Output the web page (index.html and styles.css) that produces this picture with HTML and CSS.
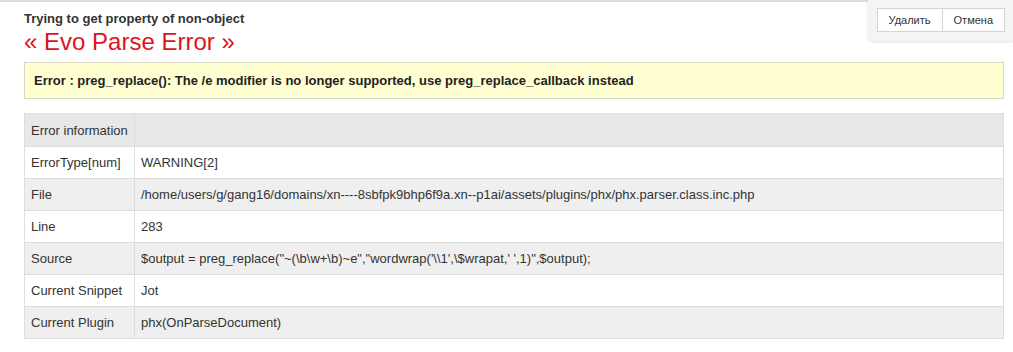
FILE: index.html
```html
<!DOCTYPE html>
<html lang="ru">
<head>
    <meta charset="UTF-8">
    <meta name="viewport" content="width=device-width, initial-scale=1.0">
    <title>Evo Parse Error</title>
    <link rel="stylesheet" href="styles.css">
</head>
<body>

<!-- Панель действий -->
<div class="actions">
    <button type="button" class="btn">Удалить</button><button type="button" class="btn">Отмена</button>
</div>

<div class="page">
    <h3 class="notice">Trying to get property of non-object</h3>
    <h2 class="title">« Evo Parse Error »</h2>

    <div class="message">Error : preg_replace(): The /e modifier is no longer supported, use preg_replace_callback instead</div>

    <!-- Информация об ошибке -->
    <table class="info">
        <tr class="head">
            <td class="key">Error information</td>
            <td></td>
        </tr>
        <tr>
            <td class="key">ErrorType[num]</td>
            <td>WARNING[2]</td>
        </tr>
        <tr class="odd">
            <td class="key">File</td>
            <td>/home/users/g/gang16/domains/xn----8sbfpk9bhp6f9a.xn--p1ai/assets/plugins/phx/phx.parser.class.inc.php</td>
        </tr>
        <tr>
            <td class="key">Line</td>
            <td>283</td>
        </tr>
        <tr class="odd">
            <td class="key">Source</td>
            <td>$output = preg_replace("~(\b\w+\b)~e","wordwrap('\\1',\$wrapat,' ',1)",$output);</td>
        </tr>
        <tr>
            <td class="key">Current Snippet</td>
            <td>Jot</td>
        </tr>
        <tr class="odd">
            <td class="key">Current Plugin</td>
            <td>phx(OnParseDocument)</td>
        </tr>
    </table>
</div>

</body>
</html>
```

FILE: styles.css
```css
/* Общие стили */
body {
    margin: 0;
    border-top: 2px solid #dcdcdc;
    font-family: "Liberation Sans", Arial, sans-serif;
    font-size: 13px;
    color: #333;
    background: #fff;
}

.page {
    margin: 0 9px 0 24px;
    padding-top: 9px;
}

/* Заголовки */
.notice {
    margin: 0;
    font-size: 13px;
    font-weight: bold;
    line-height: 16px;
    color: #333;
}

.title {
    margin: 1px 0 0;
    font-size: 24px;
    font-weight: normal;
    line-height: 28px;
    color: #dc1420;
}

/* Сообщение об ошибке */
.message {
    margin-top: 6px;
    padding: 9px 9px;
    line-height: 17px;
    background: #ffffd2;
    border: 1px solid #d8d8c0;
    font-weight: bold;
    color: #222;
}

/* Таблица */
.info {
    width: 100%;
    margin-top: 14px;
    border-collapse: collapse;
    border: 1px solid #dedede;
}

.info td {
    height: 31px;
    padding: 0 6px;
    border: 1px solid #dedede;
    line-height: 17px;
    vertical-align: middle;
    background: #fff;
}

.info .key {
    width: 97px;
    white-space: nowrap;
}

.info .head td {
    height: 32px;
    background: #e8e8e8;
}

.info .odd td {
    background: #efefef;
}

/* Панель действий */
.actions {
    position: absolute;
    top: 0;
    right: 0;
    padding: 8px 8px 9px 9px;
    background: #f4f4f4;
    border-bottom-left-radius: 5px;
    box-shadow: 0 1px 3px rgba(0, 0, 0, 0.12);
    display: flex;
}

.btn {
    height: 24px;
    padding: 0 11px;
    font-family: "Liberation Sans", Arial, sans-serif;
    font-size: 11px;
    color: #333;
    background: #fff;
    border: 1px solid #d4d4d4;
    cursor: pointer;
}

.btn + .btn {
    border-left: none;
}
```
